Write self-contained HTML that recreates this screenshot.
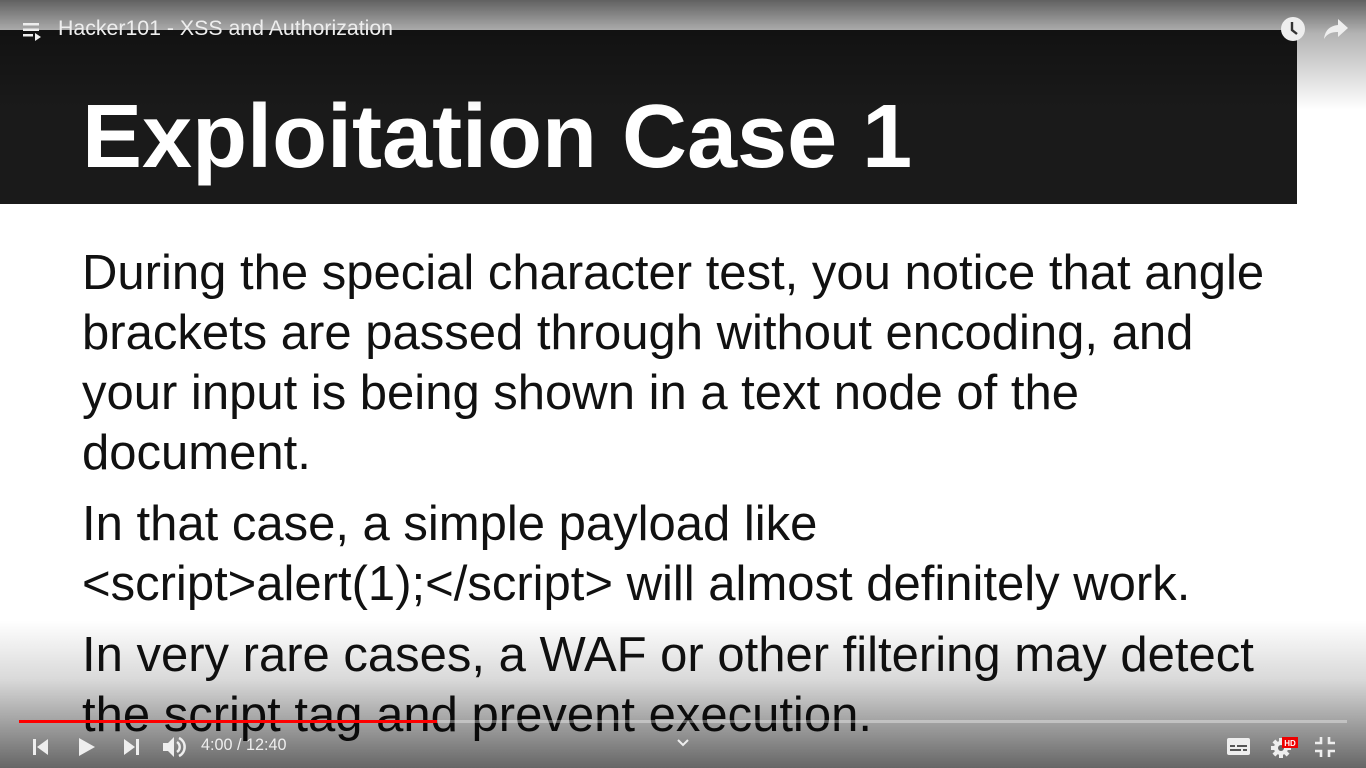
<!DOCTYPE html>
<html><head><meta charset="utf-8"><style>
html,body{margin:0;padding:0}
body{width:1366px;height:768px;overflow:hidden;position:relative;background:#fff;font-family:"Liberation Sans",Arial,sans-serif}
.band{position:absolute;left:0;top:30px;width:1297px;height:174px;background:#1a1a1a}
.title{position:absolute;left:82px;top:92px;font-size:90px;line-height:90px;font-weight:bold;color:#fff;white-space:nowrap}
.l{position:absolute;left:82px;font-size:49px;line-height:60px;color:#111;white-space:nowrap}
.topg{position:absolute;left:0;top:0;width:1366px;height:110px;background:linear-gradient(rgba(0,0,0,.62),rgba(0,0,0,.3) 30%,rgba(0,0,0,0))}
.botg{position:absolute;left:0;top:620px;width:1366px;height:148px;background:linear-gradient(rgba(0,0,0,0),rgba(0,0,0,.15) 40%,rgba(0,0,0,.6))}
.tt{position:absolute;left:58px;top:16px;color:#eee;font-size:21.3px}
.bar{position:absolute;left:19px;top:720px;width:1328px;height:3px;background:rgba(255,255,255,.35)}
.red{position:absolute;left:19px;top:720px;width:418px;height:3px;background:#f00}
.time{position:absolute;left:201px;top:736px;color:#eee;font-size:16.2px}
svg{position:absolute}
</style></head><body>
<div class="band"></div>
<div class="title">Exploitation Case 1</div>
<div class="l" style="top:243px">During the special character test, you notice that angle</div>
<div class="l" style="top:303px">brackets are passed through without encoding, and</div>
<div class="l" style="top:363px">your input is being shown in a text node of the</div>
<div class="l" style="top:423px">document.</div>
<div class="l" style="top:494px">In that case, a simple payload like</div>
<div class="l" style="top:554px">&lt;script&gt;alert(1);&lt;/script&gt; will almost definitely work.</div>
<div class="l" style="top:625px">In very rare cases, a WAF or other filtering may detect</div>
<div class="l" style="top:685px">the script tag and prevent execution.</div>
<div class="topg"></div>
<div class="botg"></div>
<svg style="left:22px;top:20px" width="24" height="22" viewBox="0 0 24 22"><rect x="1" y="3" width="16" height="2.5" fill="#eee"/><rect x="1" y="8.5" width="16" height="2.5" fill="#eee"/><rect x="1" y="14" width="10" height="2.5" fill="#eee"/><path d="M13 13l6 4-6 4z" fill="#eee"/></svg>
<div class="tt">Hacker101 - XSS and Authorization</div>
<svg style="left:1280px;top:16px" width="26" height="26" viewBox="0 0 26 26"><circle cx="13" cy="13" r="12" fill="#eee"/><path d="M12 6v8l5 4" stroke="#333" stroke-width="2.4" fill="none"/></svg>
<svg style="left:1322px;top:17px" width="28" height="24" viewBox="0 0 28 24"><path d="M16 2l10 9-10 9v-5C9 15 5 17 2 22 3 14 7 9 16 8z" fill="#eee"/></svg>
<div class="bar"></div><div class="red"></div>
<svg style="left:32px;top:738px" width="18" height="18" viewBox="0 0 18 18"><rect x="1" y="1" width="3" height="16" fill="#eee"/><path d="M16 1v16L5 9z" fill="#eee"/></svg>
<svg style="left:78px;top:737px" width="18" height="20" viewBox="0 0 18 20"><path d="M1 1l16 9-16 9z" fill="#eee"/></svg>
<svg style="left:123px;top:738px" width="18" height="18" viewBox="0 0 18 18"><path d="M1 1v16l11-8z" fill="#eee"/><rect x="13" y="1" width="3" height="16" fill="#eee"/></svg>
<svg style="left:162px;top:735px" width="24" height="24" viewBox="0 0 24 24"><path d="M1 8h5l6-6v20l-6-6H1z" fill="#eee"/><path d="M15 7a6 6 0 010 10M17 3a10 10 0 010 18" stroke="#eee" stroke-width="2.5" fill="none"/></svg>
<div class="time">4:00 / 12:40</div>
<svg style="left:677px;top:739px" width="12" height="8" viewBox="0 0 12 8"><path d="M1 1l5 5 5-5" stroke="#eee" stroke-width="2" fill="none"/></svg>
<svg style="left:1227px;top:738px" width="24" height="18" viewBox="0 0 24 18"><rect x="0" y="0" width="23" height="17" rx="2" fill="#eee"/><rect x="3" y="7" width="5" height="2" fill="#555"/><rect x="10" y="7" width="10" height="2" fill="#555"/><rect x="3" y="11" width="11" height="2" fill="#555"/><rect x="16" y="11" width="4" height="2" fill="#555"/></svg>
<svg style="left:1270px;top:736px" width="30" height="24" viewBox="0 0 30 24"><g fill="#eee"><circle cx="11" cy="12" r="7"/><rect x="9" y="2" width="4" height="20"/><rect x="1" y="10" width="20" height="4"/><rect x="9" y="2" width="4" height="20" transform="rotate(45 11 12)"/><rect x="9" y="2" width="4" height="20" transform="rotate(-45 11 12)"/></g><circle cx="11" cy="12" r="3" fill="#666"/><rect x="12" y="1" width="16" height="11" fill="#e00"/><text x="20" y="10" font-size="8" font-weight="bold" fill="#fff" text-anchor="middle" font-family="Liberation Sans">HD</text></svg>
<svg style="left:1314px;top:736px" width="22" height="22" viewBox="0 0 22 22"><path d="M7 1v6H1M15 1v6h6M7 21v-6H1M15 21v-6h6" stroke="#eee" stroke-width="2.6" fill="none"/></svg>
</body></html>
